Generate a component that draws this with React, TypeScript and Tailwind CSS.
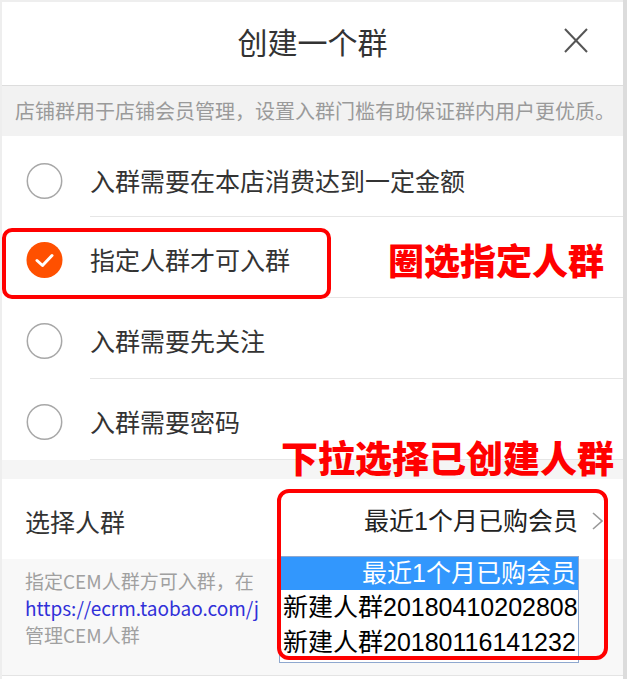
import React from "react";

const Radio = ({ checked }: { checked?: boolean }) =>
  checked ? (
    <svg width="37" height="36" viewBox="0 0 37 36" className="shrink-0">
      <circle cx="18.5" cy="18" r="18" fill="#ff5000" />
      <polyline points="11,18.5 16.5,23.5 26,13.5" fill="none" stroke="#fff" strokeWidth="3" strokeLinecap="round" strokeLinejoin="round" />
    </svg>
  ) : (
    <svg width="37" height="36" viewBox="0 0 37 36" className="shrink-0">
      <circle cx="18.5" cy="18" r="17.2" fill="#fff" stroke="#a8a8a8" strokeWidth="1.5" />
    </svg>
  );

const Row = ({ text, checked, first }: { text: string; checked?: boolean; first?: boolean }) => (
  <div className={`h-[81px] flex ${first ? "pt-[8px]" : "pt-[4px]"}`}>
    <div className="w-[88px] flex items-center pl-[24px]">
      <Radio checked={checked} />
    </div>
    <div className="flex-1 flex items-center border-b border-[#e6e6e6] text-[25px] leading-none text-[#333]">
      {text}
    </div>
  </div>
);

export default function App() {
  return (
    <div className="relative w-[641px] h-[679px] bg-white overflow-hidden font-['Noto_Sans_CJK_SC','Noto_Sans',sans-serif]">
      <div className="flex h-full">
        <div className="w-[2px] bg-[#eeeeee]" />
        <div className="w-[621px] flex flex-col">
          <div className="h-[2px] bg-[#eeeeee]" />
          {/* header */}
          <div className="h-[84px] grid grid-cols-[1fr_auto_1fr] items-center border-b border-[#dddddd]">
            <div />
            <div className="text-[30px] leading-none text-[#333] pb-[6px]">创建一个群</div>
            <div className="flex justify-end pr-[35px] pb-[6px]">
              <svg width="24" height="25" viewBox="0 0 24 25">
                <line x1="1" y1="1" x2="23" y2="24" stroke="#555" strokeWidth="2" />
                <line x1="23" y1="1" x2="1" y2="24" stroke="#555" strokeWidth="2" />
              </svg>
            </div>
          </div>
          {/* hint */}
          <div className="h-[50px] bg-[#f2f2f2] flex items-center pl-[13px] text-[20px] leading-none text-[#9a9a9a] whitespace-nowrap">
            店铺群用于店铺会员管理，设置入群门槛有助保证群内用户更优质。
          </div>
          {/* options */}
          <Row text="入群需要在本店消费达到一定金额" first />
          <Row text="指定人群才可入群" checked />
          <Row text="入群需要先关注" />
          <Row text="入群需要密码" />
          <div className="h-[19px] bg-[#f5f5f5]" />
          {/* select row */}
          <div className="h-[80px] flex items-center justify-between pl-[23px] pr-[20px] pt-[4px]">
            <div className="text-[25px] leading-none text-[#333]">选择人群</div>
            <div className="flex items-center gap-[14px]">
              <div className="text-[25px] leading-none text-[#222] font-['Liberation_Sans','Noto_Sans_CJK_SC',sans-serif]">最近1个月已购会员</div>
              <svg width="11" height="18" viewBox="0 0 11 18">
                <polyline points="1,1 10,9 1,17" fill="none" stroke="#9a9a9a" strokeWidth="1.6" />
              </svg>
            </div>
          </div>
          {/* description */}
          <div className="flex-1 bg-[#f8f8f8] border-b border-[#e4e4e4] pl-[23px] pt-[8px] mb-[3px]">
            <div className="whitespace-nowrap text-[19px] leading-[27px] text-[#a0a0a0]">
              <div>指定CEM人群方可入群，在</div>
              <div className="text-[#3030d8]">https://ecrm.taobao.com/j</div>
              <div>管理CEM人群</div>
            </div>
          </div>
        </div>
        <div className="w-[4px] bg-[#dcdcdc]" />
        <div className="flex-1 bg-white" />
      </div>

      {/* native select dropdown popup */}
      <div className="absolute left-[279px] top-[556px] w-[300px] h-[107px] bg-white border border-[#8fa8cf] overflow-hidden font-['Liberation_Sans','Noto_Sans_CJK_SC',sans-serif] text-[25px] leading-none">
        <div className="h-[33px] bg-[#3297fd] text-white flex items-center justify-end pr-[2px]">最近1个月已购会员</div>
        <div className="h-[35px] flex items-center pl-[3px] text-black whitespace-nowrap">新建人群20180410202808</div>
        <div className="h-[35px] flex items-center pl-[3px] text-black whitespace-nowrap">新建人群20180116141232</div>
      </div>

      {/* annotations */}
      <div className="absolute left-[2px] top-[228px] w-[329px] h-[71px] border-[4px] border-[#ff0000] rounded-[10px]" />
      <div className="absolute left-[388px] top-[241px] text-[36px] leading-none font-black text-[#ff0000]">圈选指定人群</div>
      <div className="absolute left-[281px] top-[439px] text-[37px] leading-none font-black text-[#ff0000]">下拉选择已创建人群</div>
      <div className="absolute left-[277px] top-[489px] w-[331px] h-[171px] border-[4px] border-[#ff0000] rounded-[12px]" />
    </div>
  );
}
